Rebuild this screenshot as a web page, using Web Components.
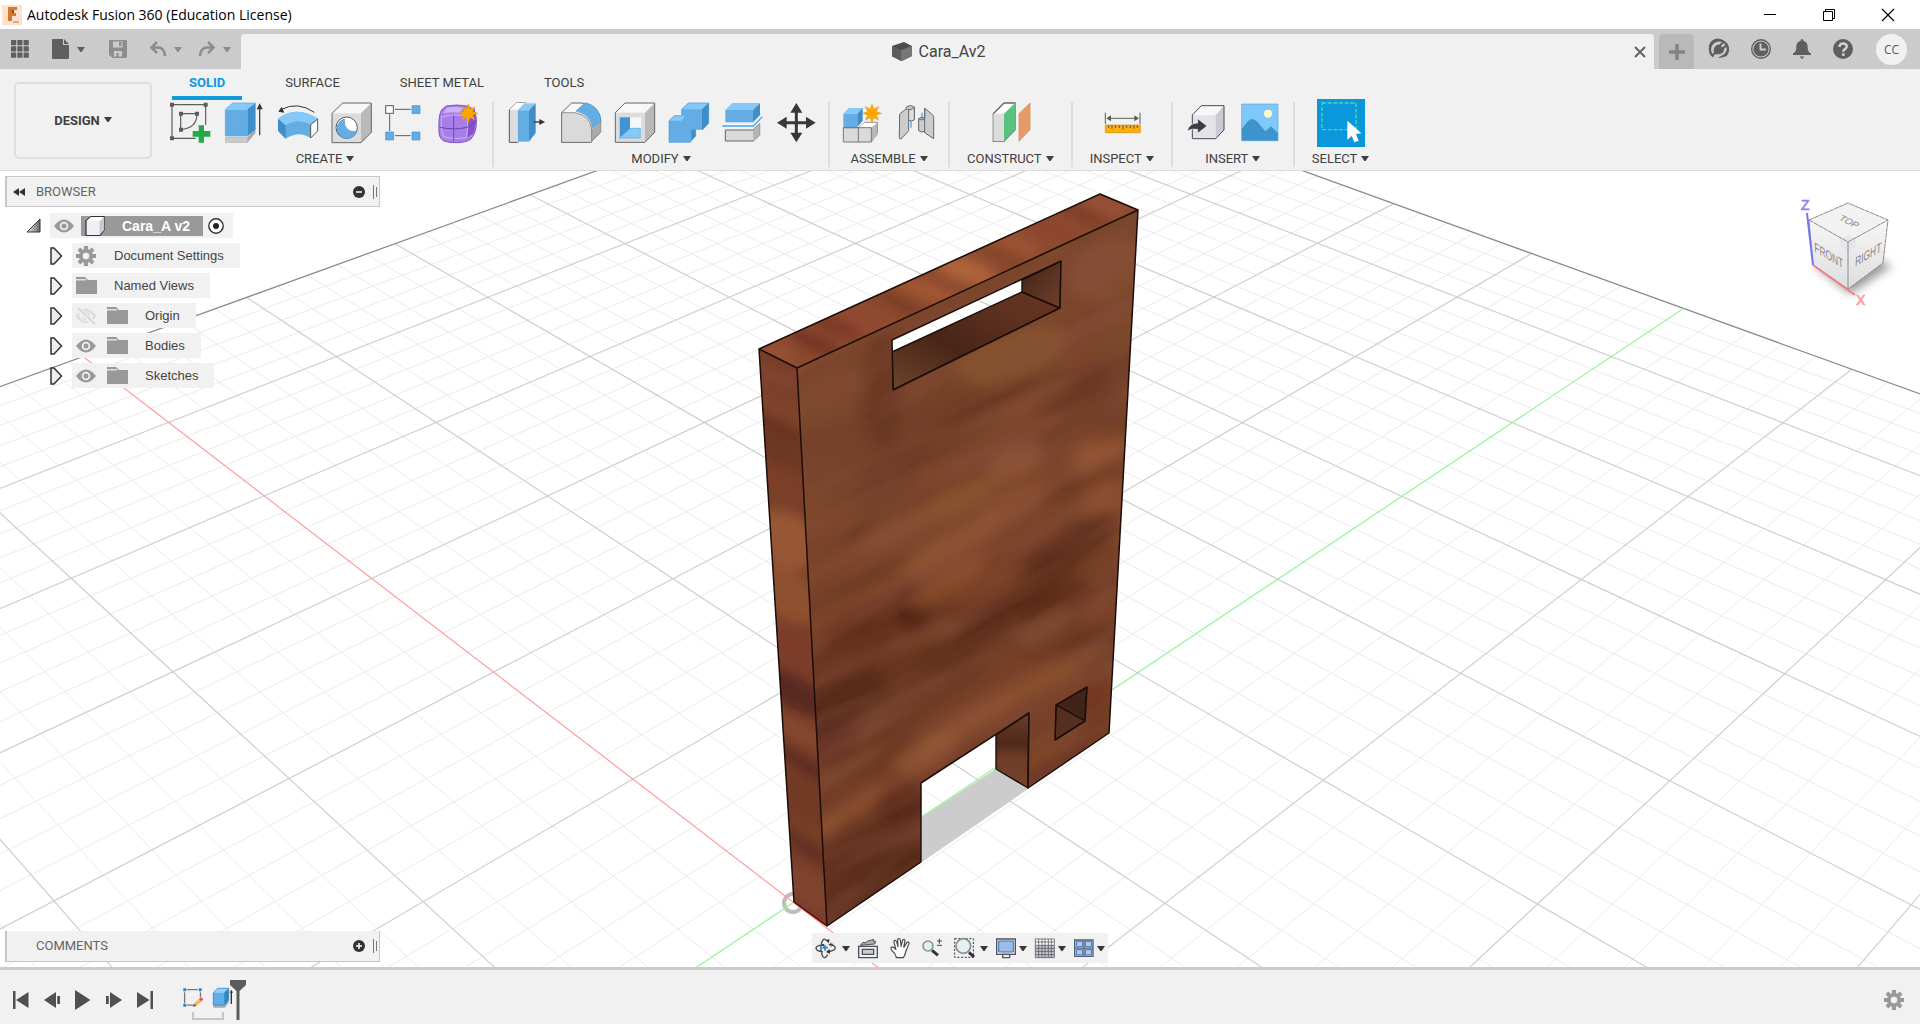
<!DOCTYPE html>
<html lang="en">
<head>
<meta charset="utf-8">
<title>Autodesk Fusion 360</title>
<style>
html,body{margin:0;height:100%}
body{background:#fff;color:#404040;font:13px/16px Roboto,"Liberation Sans",sans-serif}
</style>
</head>
<body>
<fusion-app></fusion-app>
<script>
const G='#5f5f5f', L='#5c5c5c';
const caretSvg='<svg width="8" height="5" viewBox="0 0 8 5" aria-hidden="true"><path d="M0 0h8L4.6 5H3.4z" fill="currentColor"/></svg>';
const burst=(x,y)=>{let d='';for(let i=0;i<16;i++){const r=i%2?14:29,a=Math.PI*i/8;d+=(i?'L':'M')+(x+r*Math.sin(a)).toFixed(1)+' '+(y-r*Math.cos(a)).toFixed(1)}return `<path d="${d}z" fill="#ffa500" stroke="#e08a00" stroke-width="1"/>`};
const gear=(x,y,r,c)=>{let t='';for(let i=0;i<8;i++)t+=`<rect x="${x-r*.2}" y="${y-r}" width="${r*.4}" height="${r*.5}" transform="rotate(${i*45} ${x} ${y})" fill="${c}"/>`;return t+`<circle cx="${x}" cy="${y}" r="${r*.52}" fill="none" stroke="${c}" stroke-width="${r*.38}"/>`};

/* name: [viewBox, width, height, drawing] */
const ICONS={
grid:['0 0 18 18',18,18,`<g fill="${G}">`+[0,1,2].map(i=>[0,1,2].map(j=>`<rect x="${i*6.3}" y="${j*6.3}" width="5.2" height="5.2" rx=".6"/>`).join('')).join('')+'</g>'],
file:['0 0 17 20',17,20,`<path d="M1 0h10v6h6v13q0 1-1 1H1q-1 0-1-1V1q0-1 1-1zM12 0l5 5h-5z" fill="${G}"/>`],
save:['0 0 18 18',18,18,'<path d="M1 0h16l1 1v16l-1 1H4l-4-3V1z" fill="#8d8d8d"/><path d="M4 1.500h9.500v6H4zM5 11h8v5.500H5z" fill="#cbcbcb"/><path d="M10 2h2.500v4H10zM7.500 13h2v4h-2z" fill="#8d8d8d"/>'],
undo:['0 0 16 16',16,16,'<path d="M7 1L1.500 6.500 7 12M2 6.500h6c4 0 6.500 3 7 8.500" fill="none" stroke="#8d8d8d" stroke-width="2.500"/>'],
redo:['0 0 16 16',16,16,'<path d="M9 1l5.500 5.500L9 12M14 6.500H8C4 6.500 1.500 9.500 1 15" fill="none" stroke="#8d8d8d" stroke-width="2.500"/>'],
cube:['0 0 20 20',20,20,'<path d="M0 4L12 0l8 4v10l-10 5-10-5z" fill="#4c4c4c"/><path d="M9 8l11-4v10l-11 5z" fill="#777"/><path d="M0 4l9 4v11l-9-4.500z" fill="#5d5d5d"/>'],
close:['0 0 12 12',12,12,'<path d="M1 1l10 10M11 1L1 11" stroke="#666" stroke-width="2"/>'],
plus:['0 0 16 16',16,16,'<path d="M8 0v16M0 8h16" stroke="#838383" stroke-width="3.600"/>'],
plug:['0 0 20 20',20,20,`<path d="M4.500 17.500A9 9 0 1 1 16 17" fill="none" stroke="${G}" stroke-width="2.200"/><path d="M1 13a9 9 0 0 1 14-11l3.500 3.500a9 9 0 0 1-5 13l-5 .5 7-4 3-5-2-6-6-3-6 2-3 6z" fill="${G}"/><path d="M4 16l3-3" stroke="${G}" stroke-width="2"/><path d="M6 13.500C4.500 10 7 6.500 10 6.500l4 4c0 3-4 5-8 3zM10.500 7l3.500-3.500M13.500 10L17 6.500" fill="${G}" stroke="${G}" stroke-width="2"/>`],
clock:['0 0 20 20',20,20,`<circle cx="10" cy="10" r="9.300" fill="none" stroke="${G}" stroke-width="1.400"/><circle cx="10" cy="10" r="7.600" fill="${G}"/><path d="M9.500 4.500v6H15" fill="none" stroke="#cbcbcb" stroke-width="2"/>`],
bell:['0 0 18 20',18,20,`<path d="M9 0q1.500 0 1.500 2c3 .6 4.200 3 4.200 6 0 4 1 5 3.300 6.500V16H0v-1.500C2.300 13 3.300 12 3.300 8c0-3 1.200-5.400 4.200-6Q7.500 0 9 0zM6.500 17.500h5L9 20z" fill="${G}"/>`],
help:['0 0 20 20',20,20,`<circle cx="10" cy="10" r="10" fill="${G}"/><path d="M6.500 8c0-5 7.500-4.500 7.300-.5-.2 2.500-3.600 2.500-3.600 5.300" fill="none" stroke="#d2d2d2" stroke-width="2.500"/><rect x="9" y="14.300" width="2.600" height="2.600" fill="#d2d2d2"/>`],
min:['0 0 12 12',12,12,'<path d="M0 5.500h12" stroke="#000"/>'],
restore:['0 0 12 12',12,12,'<path d="M.5 2.500h9v9h-9zM2.500 2V.5h9v9H10" fill="none" stroke="#000"/>'],
quit:['0 0 12 12',12,12,'<path d="M0 0l12 12M12 0L0 12" stroke="#000" stroke-width="1.200"/>'],

sketch:['513 306 120 120',40,40,`<path d="M519 314H620V375M519 314V415H590M545 341H594M545 341V388Q594 385 594 341" fill="none" stroke="${L}" stroke-width="3.500"/><g fill="${L}"><path d="M513 308h12v12h-12zM614 308h12v12h-12zM513 409h12v12h-12zM540 335h12v12h-12zM588 335h12v12h-12zM540 383h12v12h-12z"/></g><path d="M599 376h16v17h19v17h-19v18h-16v-18h-18v-17h18z" fill="#23a84a"/>`],
extrude:['675 306 120 120',40,40,'<path d="M679 412h66l24-24v12l-24 28h-66z" fill="#aaa"/><path d="M679 412h66v16h-66z" fill="#c9c9c9"/><path d="M679 328h66v80h-66z" fill="#64ade4"/><path d="M679 328l22-19h68l-24 19z" fill="#85c8fa"/><path d="M745 328l24-19v80l-24 19z" fill="#3f8dc9"/><path d="M679 408v-80l22-19h68v80l-24 19z" fill="none" stroke="#55a3dc" stroke-width="2"/><path d="M782 406V320" stroke="#333" stroke-width="3.500"/><path d="M773 328h18l-9-18z" fill="#333"/>'],
revolve:['837 306 120 120',40,40,'<path d="M837 356q54-42 120 0l-22 58q-36-24-75 2l-23-24z" fill="#64ade4"/><path d="M837 356l23 20v40l-23-24z" fill="#3f8dc9"/><path d="M837 356q54-42 120 0l-22 18q-36-22-75 2z" fill="#85c8fa"/><path d="M935 374l21-17v36l-21 21z" fill="#fff" stroke="#555" stroke-width="3"/><path d="M946 337q-50-34-98-9" fill="none" stroke="#333" stroke-width="3"/><path d="M838 335l10-15 8 18z" fill="#333"/>'],
hole:['999 306 120 120',40,40,'<path d="M999 340l32-31h86l-31 31z" fill="#f7f7f7"/><path d="M1086 340l31-31v88l-31 31z" fill="#b9b9b9"/><path d="M999 340h87v88h-87z" fill="#dcdcdc"/><path d="M999 340l32-31h86v88l-31 31h-87z" fill="none" stroke="#666" stroke-width="3"/><circle cx="1043" cy="383" r="32" fill="#fff" stroke="#555" stroke-width="3"/><path d="M1036 357q-3 40 37 38a30 30 0 1 1-37-38z" fill="#64ade4" stroke="#4a94cf" stroke-width="2"/>'],
pattern:['1161 306 120 120',40,40,`<path d="M1188 328h47M1172 343v50M1188 407h47" stroke="${L}" stroke-width="3"/><rect x="1160" y="317" width="23" height="23" fill="#fff" stroke="#555" stroke-width="3"/><g fill="#64ade4" stroke="#4793cc" stroke-width="2"><path d="M1239 317h24v24h-24zM1160 396h24v24h-24zM1239 396h24v24h-24z"/></g>`],
form:['1323 306 120 120',40,40,'<path d="M1343 318q30-6 60 0c20 5 30 20 29 50q0 30-17 50c-20 13-60 12-80 5-16-10-16-20-15-60 2-28 8-38 23-45z" fill="#a981e6" stroke="#7c50c4" stroke-width="3"/><path d="M1343 324q25-6 50 0l-12 14q-25-3-48 2z" fill="#cdb2f8"/><path d="M1403 345l24-20q8 40-4 75l-18 12z" fill="#8452cf"/><path d="M1328 350q40-9 76-3 6 35-2 66-38 6-68-3-10-20-6-60z" fill="#a97de8" stroke="#cdb4f5" stroke-width="3"/><path d="M1322 382q45 9 82 0l28-18M1364 346v78" stroke="#6e45b5" stroke-width="3" fill="none"/>'+burst(1408,340)],

presspull:['78 126 120 120',40,40,'<path d="M88 149l20-20h32v100l-25 18H88z" fill="#dcdcdc" stroke="#555" stroke-width="3"/><path d="M88 149l20-20h30l-20 20z" fill="#fff"/><path d="M112 151h35v95h-35z" fill="#64ade4"/><path d="M112 151l21-22h35l-21 22z" fill="#85c8fa"/><path d="M147 151l21-22v90l-21 27z" fill="#3f8dc9"/><path d="M112 246v-95l21-22h35v90l-21 27z" fill="none" stroke="#f1f1f1" stroke-width="2"/><path d="M161 186h19" stroke="#333" stroke-width="4"/><path d="M178 177l17 9-17 9z" fill="#333"/>'],
fillet:['240 126 120 120',40,40,'<path d="M245 158l30-29h30q50 6 57 48v40l-30 30h-87z" fill="#f8f8f8" stroke="#666" stroke-width="3"/><path d="M332 210l30-25v32l-30 30z" fill="#aaa"/><path d="M245 158h40q46 8 50 50v39h-90z" fill="#dadada" stroke="#666" stroke-width="2"/><path d="M288 153l28-25q44 10 47 56l-26 20q-3-40-49-51z" fill="#64ade4" stroke="#4a97d0" stroke-width="2"/>'],
shell:['402 126 120 120',40,40,'<path d="M406 158l29-29h89l-29 29z" fill="#f8f8f8"/><path d="M495 158l29-29v88l-29 30z" fill="#b8b8b8"/><path d="M406 158h89v89h-89z" fill="#dcdcdc"/><path d="M406 158l29-29h89v88l-29 30h-89z" fill="none" stroke="#666" stroke-width="3"/><path d="M419 172h64v62h-64z" fill="#f7f7f7"/><path d="M419 172h31v34l-31 28z" fill="#4295d2"/><path d="M450 205h31v29h-62z" fill="#85c8fa" stroke="#55a2db" stroke-width="2"/>'],
combine:['564 126 120 120',40,40,'<path d="M567 182l16-15h22v-19l20-19h61v61l-17 18h-22v20l-18 19h-62z" fill="#64ade4"/><path d="M567 182l16-15h30l-8 15zM605 148l20-19h61l-20 19z" fill="#85c8fa"/><path d="M666 148l20-19v61l-17 18h-3zM634 210l13-2v20l-18 19h5z" fill="#3f8dc9"/><path d="M567 182l16-15h22v-19l20-19h61v61l-17 18h-22v20l-18 19h-62z" fill="none" stroke="#4a9bd7" stroke-width="2"/>'],
split:['726 126 120 120',40,40,'<path d="M736 210h83l20-19v34l-19 18h-84z" fill="#dadada" stroke="#666" stroke-width="3"/><path d="M819 210l20-19v34l-19 18z" fill="#b5b5b5"/><path d="M736 150h83v37h-83z" fill="#64ade4"/><path d="M736 150l21-21h83l-21 21z" fill="#85c8fa"/><path d="M819 150l21-21v36l-21 22z" fill="#3f8dc9"/><path d="M727 198h94l26-28" fill="none" stroke="#fff" stroke-width="8"/><path d="M727 198h94l26-28" fill="none" stroke="#41a0e6" stroke-width="4"/>'],
move:['888 126 120 120',40,40,'<path d="M949 150v76M910 188h78" stroke="#383838" stroke-width="9"/><path d="M931 158l18-29 18 29zM931 218l18 29 18-29zM920 170l-29 18 29 18zM978 170l29 18-29 18z" fill="#383838"/>'],
component:['1089 126 120 120',40,40,'<path d="M1093 203h45l20-16h37v32l-18 27h-84z" fill="#dadada" stroke="#777" stroke-width="3"/><path d="M1138 203l18-15h39l-18 15z" fill="#fff"/><path d="M1177 203l18-15v38l-18 20z" fill="#b8b8b8"/><path d="M1138 203v43M1093 203h84v43" fill="none" stroke="#777" stroke-width="3"/><path d="M1093 161h42v40h-42z" fill="#64ade4"/><path d="M1093 161l16-17h42l-16 17z" fill="#85c8fa"/><path d="M1135 161l16-17v38l-16 19z" fill="#3f8dc9"/>'+burst(1179,160)],
joint:['1251 126 120 120',40,40,'<g stroke="#666" stroke-width="3"><path d="M1262 162l20-16v-5q13-9 24 0v37q-9 8-17 1v33l-23 25q-5 1-5-5z" fill="#ccc"/><path d="M1282 146q10 8 24-4v37q-9 8-17 1v-31" fill="#dedede"/><path d="M1337 145l22 18q5 3 5 10v63l-27-18v-4q-10 5-18-2v-36q8-8 18-2z" fill="#ccc"/><path d="M1337 145v73M1319 176q10 8 18 0" fill="none"/></g><path d="M1296 183v20M1329 158v20" stroke="#48a2e4" stroke-width="4"/>'],
construct:['153 126 120 120',40,40,'<path d="M163 161l32-32h33v80l-33 34h-32z" fill="#fff" stroke="#666" stroke-width="4"/><path d="M163 161h32v82h-32z" fill="#dcdcdc"/><path d="M195 161l33-32v80l-33 35z" fill="#57c37e"/><path d="M240 161l33-32v80l-33 35z" fill="#e69b69" stroke="#d58550" stroke-width="2"/>'],
measure:['489 126 120 120',40,40,`<path d="M499 158v34M603 158v34M510 175h82" stroke="${L}" stroke-width="3"/><path d="M502 175l14-9v18zM600 175l-14-9v18z" fill="${L}"/><path d="M499 195h105v23H499z" fill="#ffad0a" stroke="#d48c00" stroke-width="2"/><path d="M509 196v8M519 196v10M530 196v8M541 196v8M552 196v12M563 196v8M574 196v8M585 196v10M595 196v8" stroke="#555" stroke-width="3"/>`],
insert:['744 126 120 120',40,40,'<path d="M763 163l27-26h68v73l-25 26h-70z" fill="#f7f7f9"/><path d="M763 166h70v70h-70z" fill="#e3e4e9"/><path d="M833 166l25-29v73l-25 26z" fill="#c9cad3"/><path d="M763 165l27-28h68v73l-25 26h-70z" fill="none" stroke="#484a50" stroke-width="3"/><path d="M748 213q6-24 31-24v-13l28 22-28 22v-12q-18-3-31 5z" fill="#3b3d42" stroke="#f1f1f1" stroke-width="2"/>'],
picture:['902 126 120 120',40,40,'<path d="M907 132h109v110H907z" fill="#7fc8fb"/><path d="M907 207l20-25q14-11 27 3l24 29 17-15 21 20v23H907z" fill="#3d93cc"/><circle cx="986" cy="161" r="12" fill="#fff9c8"/><path d="M907 132h109v110H907z" fill="none" stroke="#59a9df" stroke-width="2"/>'],
select:['1131 117 144 144',48,48,'<path d="M1131 117h144v144h-144z" fill="#0b97db"/><path d="M1146 129h102v80h-102z" fill="none" stroke="#45dba8" stroke-width="4" stroke-dasharray="12 5"/><path d="M1222 182v57l13-11 8 19 13-5-8-20 16-2z" fill="#fff"/>'],

collapse:['0 0 12 8',12,8,'<path d="M0 4l6-4v8zM6 4l6-4v8z" fill="#333"/>'],
minus:['0 0 12 12',12,12,'<circle cx="6" cy="6" r="6" fill="#333"/><path d="M3 6h6" stroke="#fff" stroke-width="1.500"/>'],
add:['0 0 12 12',12,12,'<circle cx="6" cy="6" r="6" fill="#333"/><path d="M3 6h6M6 3v6" stroke="#fff" stroke-width="1.500"/>'],
grip:['0 0 4 14',4,14,'<path d="M.5 0v14M3.500 2v10" stroke="#777"/>'],
opened:['0 0 15 15',15,15,'<defs><linearGradient id="o"><stop stop-color="#eee"/><stop offset="1" stop-color="#666"/></linearGradient></defs><path d="M1 14L14 1v13z" fill="url(#o)" stroke="#333"/>'],
closed:['0 0 13 18',13,18,'<path d="M1 1h3l7.500 8L4 17H1z" fill="#eee" stroke="#333" stroke-width="1.500"/>'],
eye:['0 0 20 14',20,14,'<path d="M0 7Q10-6 20 7 10 20 0 7z" fill="#999"/><circle cx="10" cy="7" r="3.400" fill="none" stroke="#f1f1f1" stroke-width="1.800"/>'],
hidden:['0 0 20 16',20,16,'<path d="M1 8Q10-4 19 8 10 20 1 8z" fill="none" stroke="#ddd" stroke-width="2.500"/><circle cx="10" cy="8" r="4" fill="#ddd"/><path d="M1 0l18 16" stroke="#f1f1f1" stroke-width="5"/><path d="M2 0l17 16" stroke="#d8d8d8" stroke-width="2"/>'],
folder:['0 0 21 17',21,17,'<path d="M0 0h9l3 3h9v14H0z" fill="#999"/><path d="M0 2.800h10" stroke="#f1f1f1" stroke-width="1.200"/>'],
gear:['0 0 20 20',20,20,gear(10,10,10,'#999')],
body:['0 0 20 20',20,20,'<path d="M1 5l5-4.500h13V14l-4 5.500H1z" fill="#eef0f5" stroke="#333" stroke-width="1.200"/><path d="M14.500 5L19 .800V14l-4.500 5z" fill="#c6c9d2"/><path d="M1.500 5L6 1h12.500l-4 4z" fill="#fff"/>'],
radio:['0 0 16 16',16,16,'<circle cx="8" cy="8" r="7.200" fill="#fff" stroke="#333" stroke-width="1.400"/><circle cx="8" cy="8" r="3" fill="#222"/>'],

orbit:['75 38 60 60',20,20,'<g fill="none" stroke="#444a50" stroke-width="4"><path d="M96 80Q75 77 75 69t22-11M113 57q20 3 20 11t-24 11M110 88q-12 20-18-4t3-39q6-8 12 2"/></g><path d="M104 44l12-2-3 12zM116 71l-11 9 12 6zM91 58l9-2-2 8z" fill="#333"/><path d="M102 59v17M94 67h17" stroke="#1588e5" stroke-width="5"/><path d="M120 52v12M114 57h13" stroke="#444" stroke-width="3"/>'],
look:['198 38 60 60',20,20,'<path d="M200 63h56v34h-56z" fill="#f0f0f3" stroke="#4b5056" stroke-width="4"/><path d="M211 72h34v15h-34z" fill="#ccc" stroke="#4b5056" stroke-width="4"/><path d="M205 60l8-9 6 2q8-7 17-8l9-3-2 5 8 1-3 8z" fill="#aeb1b5" stroke="#4b5056" stroke-width="3"/>'],
pan:['296 38 60 60',20,20,'<path d="M315 97q-2-13-12-20-7-10-2-12 5-2 13 8l-6-22q-1-6 4-6 4 0 8 20l-1-20q1-7 6-5 3 2 4 24l5-20q5-5 7 1l-4 22 10-16q7-2 6 4l-9 22q-4 15-8 20z" fill="#fff" stroke="#444a50" stroke-width="3.500"/>'],
zoom:['391 38 60 60',20,20,'<circle cx="409" cy="62" r="15" fill="#e2f0f1" stroke="#8a949b" stroke-width="5"/><path d="M421 75l18 15" stroke="#333" stroke-width="9"/><path d="M443 40v15M436 47h15M436 60h15" stroke="#444" stroke-width="3"/>'],
fit:['489 38 60 60',20,20,'<path d="M491 40h56v56h-56z" fill="none" stroke="#333" stroke-width="3" stroke-dasharray="6 5"/><circle cx="517" cy="62" r="22" fill="#e4f1f0" stroke="#858f94" stroke-width="5"/><path d="M534 81l15 14" stroke="#333" stroke-width="9"/>'],
display:['613 38 60 60',20,20,'<path d="M615 41h56v46h-56z" fill="#f0f0f2" stroke="#50555d" stroke-width="4"/><path d="M621 47h44v33h-44z" fill="#9bbce9" stroke="#466fae" stroke-width="3"/><path d="M633 87h21v10h-21z" fill="#eee" stroke="#555" stroke-width="4"/>'],
gridview:['731 38 60 60',20,20,'<path d="M732 41h57v56h-57z" fill="#fff"/><path d="M732 60h57v37h-57z" fill="#c2c7d0"/><path d="M732 41h57v56h-57zM742 41v56M752 41v56M761 41v56M771 41v56M780 41v56M732 50h57M732 60h57M732 69h57M732 78h57M732 88h57" fill="none" stroke="#5b6066" stroke-width="2.500"/>'],
views:['845 38 60 60',20,20,'<path d="M847 44h55v49h-55z" fill="#dce9f9" stroke="#526078" stroke-width="4"/><path d="M852 48h19v16h-19zM879 48h19v16h-19zM852 73h19v16h-19zM879 73h19v16h-19z" fill="#aec8ed" stroke="#4974b2" stroke-width="3"/><path d="M875 44v49M847 68.500h55" stroke="#526078" stroke-width="4"/>'],

first:['0 0 16 18',16,18,`<path d="M0 0h2.500v18H0zM15.500 1v16L3 9z" fill="#505050"/>`],
prev:['0 0 16 18',16,18,`<path d="M0 9l12-8v16zM13.200 5H16v8h-2.800z" fill="#505050"/>`],
play:['0 0 16 20',16,20,`<path d="M0 0l15.500 10L0 20z" fill="#505050"/>`],
next:['0 0 16 18',16,18,`<path d="M16 9L4 1v16zM0 5h2.800v8H0z" fill="#505050"/>`],
last:['0 0 16 18',16,18,`<path d="M13.500 0H16v18h-2.500zM0 1v16l12.500-8z" fill="#505050"/>`],
stepsketch:['546 205 62 62',20,20,'<path d="M558 210h34M551 218v34M558 258h20M600 218v16" stroke="#777" stroke-width="4"/><g fill="#1689df"><path d="M547 206h9v9h-9zM595 206h9v9h-9zM547 254h9v9h-9z"/></g><path d="M580 254l15-15 8 8-15 13z" fill="#ffb53d"/><path d="M595 239l8-5 6 6-6 7z" fill="#f04b46"/><path d="M577 264l3-10 8 6z" fill="#555"/>'],
stepextrude:['637 205 60 60',20,20,'<path d="M638 256h32l14-14v7l-12 15h-34z" fill="#aaa"/><path d="M638 256v-37l13-13h33v35l-13 15z" fill="#5faee9" stroke="#408fc9" stroke-width="3"/><path d="M638 219l13-12h32l-13 12z" fill="#8fd0ff"/><path d="M671 219l12-12v34l-12 14z" fill="#3385c1"/><path d="M692 253v-36" stroke="#333" stroke-width="4"/><path d="M687 219l5-9 5 9z" fill="#333"/>'],
marker:['0 0 16 40',16,40,'<path d="M0 0h16v5L9.500 11v29h-3V11L0 5z" fill="#5c5c5c"/>']
};

const BASE=`*{box-sizing:border-box}button{all:unset;box-sizing:border-box;display:flex;align-items:center;justify-content:center;cursor:default}svg{display:block;overflow:visible;flex:none}`;
class Base extends HTMLElement{
  connectedCallback(){ if(this.shadowRoot)return; this.attachShadow({mode:'open'}).innerHTML=`<style>${BASE}${this.css()}</style>${this.html()}`; }
  css(){return ''} html(){return '<slot></slot>'}
}
const define=(n,css,html)=>customElements.define(n,class extends Base{
  css(){return typeof css==='function'?css(this):css}
  html(){return typeof html==='function'?html(this):html}
});

define('ui-icon',':host{display:block;flex:none}',el=>{const [v,w,h,d]=ICONS[el.getAttribute('name')];return `<svg viewBox="${v}" width="${w}" height="${h}" aria-hidden="true">${d}</svg>`});
define('icon-button',':host{display:block;flex:none}button{gap:var(--gap,4px);color:var(--caret,#383838)}',el=>`<button aria-label="${el.getAttribute('label')}"><ui-icon name="${el.getAttribute('icon')}"></ui-icon>${el.hasAttribute('menu')?caretSvg:''}</button>`);
define('menu-button',':host{display:block}button{gap:4px;white-space:nowrap}svg{margin-bottom:2px}','<button aria-haspopup="true"><slot></slot>'+caretSvg+'</button>');

define('title-bar',`:host{display:flex;align-items:center;height:29px;padding:0 26px 0 2px;background:#fff;color:#000;font:14px/20px "Open Sans","Noto Sans",sans-serif}
.logo{width:20px;height:20px;margin-right:5px}.t{flex:1}.w{display:flex;gap:47px}`,
`<svg class="logo" viewBox="0 0 20 20"><rect width="20" height="20" fill="#fde3cf"/><path d="M6 2h9v3h-5v3h4v3h-4v5H6z" fill="#d9772b"/><path d="M10 5h2v3h-2z" fill="#8e4312"/><path d="M11 16h6v2h-6z" fill="#f2a365"/></svg><span class="t">Autodesk Fusion 360 (Education License)</span>
<div class="w"><icon-button icon="min" label="Minimize"></icon-button><icon-button icon="restore" label="Restore"></icon-button><icon-button icon="quit" label="Close"></icon-button></div>`);

define('document-bar',`:host{display:flex;height:40px;background:#cbcbcb;align-items:stretch}
.quick{display:flex;align-items:center;width:241px;padding-left:11px}
.quick icon-button{--gap:8px;--caret:#5f5f5f}.quick .a{margin-left:23px}.quick .b{margin-left:24px}.quick .c{margin-left:23px}.quick .d{margin-left:17px}.quick .c,.quick .d{--caret:#8d8d8d}
.tab{flex:1;display:flex;align-items:center;margin-top:5px;padding:0 8px 0 2px;background:#f1f1f1;border-radius:4px 4px 0 0}
.name{flex:1;display:flex;gap:7px;align-items:center;justify-content:center;font:16px/20px Roboto,sans-serif;color:#444}
.new{width:35px;margin:5px 0 0 5px;background:#b9b9b9;border-radius:4px 4px 0 0;display:grid;place-items:center}
.tools{display:flex;align-items:center;gap:22px;padding:0 13px 0 15px}
.user{width:31px;height:31px;border-radius:50%;background:#f1f1f1;color:#4d5b66;font:12px/31px "Open Sans",sans-serif;margin-left:1px}`,
`<div class="quick"><icon-button icon="grid" label="Data panel"></icon-button><icon-button class="a" icon="file" label="File" menu></icon-button><icon-button class="b" icon="save" label="Save"></icon-button><icon-button class="c" icon="undo" label="Undo" menu></icon-button><icon-button class="d" icon="redo" label="Redo" menu></icon-button></div>
<div class="tab"><div class="name"><ui-icon name="cube"></ui-icon><span>Cara_Av2</span></div><icon-button icon="close" label="Close tab"></icon-button></div>
<div class="new"><icon-button icon="plus" label="New tab"></icon-button></div>
<div class="tools"><icon-button icon="plug" label="Extensions"></icon-button><icon-button icon="clock" label="Job status"></icon-button><icon-button icon="bell" label="Notifications"></icon-button><icon-button icon="help" label="Help"></icon-button><button class="user">CC</button></div>`);

define('tool-group',el=>`:host{display:flex;flex-direction:column;align-items:center;gap:9px;padding:0 ${el.getAttribute('pad')||12}px;border-right:2px solid #dedede;height:65px}:host([last]){border:0;gap:4px;margin-top:-3px}.i{display:flex;gap:14px;justify-content:center}`,
 el=>`<div class="i"><slot></slot></div><menu-button>${el.getAttribute('label')}</menu-button>`);

define('tool-ribbon',`:host{display:flex;height:102px;background:#f1f1f1;border-bottom:1px solid #dcdcdc;padding:0 14px}
.design{width:138px;height:77px;margin-top:13px;border:2px solid #dedede;border-radius:5px;display:grid;place-items:center;font-weight:700}
.main{margin-left:6px}
.tabs{display:flex;gap:26px;padding-left:14px;height:33px}
.tabs button{padding:6px 17px 5px;height:31px;border-bottom:4px solid transparent}
.tabs .on{color:#0e97dc;font-weight:700;border-color:#1499da}
.groups{display:flex}`,
`<div class="design"><menu-button>DESIGN</menu-button></div>
<div class="main"><div class="tabs" role="tablist"><button role="tab" class="on">SOLID</button><button role="tab">SURFACE</button><button role="tab">SHEET METAL</button><button role="tab">TOOLS</button></div>
<div class="groups">
<tool-group label="CREATE"><icon-button icon="sketch" label="Create sketch"></icon-button><icon-button icon="extrude" label="Extrude"></icon-button><icon-button icon="revolve" label="Revolve"></icon-button><icon-button icon="hole" label="Hole"></icon-button><icon-button icon="pattern" label="Pattern"></icon-button><icon-button icon="form" label="Form"></icon-button></tool-group>
<tool-group label="MODIFY"><icon-button icon="presspull" label="Press pull"></icon-button><icon-button icon="fillet" label="Fillet"></icon-button><icon-button icon="shell" label="Shell"></icon-button><icon-button icon="combine" label="Combine"></icon-button><icon-button icon="split" label="Split"></icon-button><icon-button icon="move" label="Move"></icon-button></tool-group>
<tool-group label="ASSEMBLE"><icon-button icon="component" label="New component"></icon-button><icon-button icon="joint" label="Joint"></icon-button></tool-group>
<tool-group label="CONSTRUCT" pad="17"><icon-button icon="construct" label="Offset plane"></icon-button></tool-group>
<tool-group label="INSPECT" pad="17"><icon-button icon="measure" label="Measure"></icon-button></tool-group>
<tool-group label="INSERT" pad="13"><icon-button icon="insert" label="Insert derive"></icon-button><icon-button icon="picture" label="Canvas"></icon-button></tool-group>
<tool-group label="SELECT" pad="17" last><icon-button icon="select" label="Select"></icon-button></tool-group>
</div></div>`);

/* Ground plane: perspective mapping of grid cells to the canvas */
const project=(s,t)=>{const d=1+.0768*s+.0753*t;return d<.25?null:[793.5+(-173*s+197.9*t)/d,902.5-(132.9*s+132.1*t)/d]};
const gridPaths=()=>{
  const S0=-8,S1=6,T0=-8,T1=6.8;let minor='',major='';
  const line=(f,a,b)=>{let d='',last=null,first=null;for(let i=0;i<=60;i++){const p=project(...f(a+(b-a)*i/60));if(p){first=first||p;last=p}}if(first&&last&&first!==last)d=`M${first.map(v=>v.toFixed(1))}L${last.map(v=>v.toFixed(1))}`;return d};
  for(let i=-40;i<30;i++){if(i===0)continue;const d=line(t=>[i/5,t],T0,T1);i%5?minor+=d:major+=d}
  for(let i=-40;i<34;i++){if(i===0)continue;const d=line(s=>[s,i/5],S0,S1);i%5?minor+=d:major+=d}
  return {minor,major,edge:line(t=>[S1,t],T0,T1)+line(s=>[s,T1],S0,S1),red:line(s=>[s,0],S0,S1),green:line(t=>[0,t],T0,T1)};
};
/* Wood grain: x, y, half length, half thickness, angle, colour, opacity */
const FRONT=[
[900,650,120,55,-28,'#5f2f1f',.6],[1050,590,80,70,-28,'#64331f',.55],[860,860,70,50,-30,'#5c2c1d',.6],[860,450,70,60,-25,'#713e2a',.5],
[883,392,22,60,0,'#643320',.6],[830,400,40,22,-25,'#834e31',.5],[973,400,70,16,-25,'#6c3922',.7],[1010,357,60,24,-20,'#8a5530',.8],[935,395,40,20,-20,'#74412a',.6],
[1108,270,40,28,-30,'#885234',.75],[1050,235,30,14,-25,'#8a5530',.6],[1090,385,65,16,-25,'#613120',.8],[1020,410,60,12,-25,'#86502f',.5],[1000,398,70,6,-25,'#5f301e',.6],[940,448,80,6,-25,'#643420',.6],[905,465,80,5,-25,'#5f301d',.6],[985,475,90,5,-26,'#633320',.8],[1075,430,65,5,-25,'#5c2c1b',.8],
[890,515,95,6,-25,'#5f301e',.8],[1015,462,30,14,-25,'#985d3a',.7],[953,500,50,14,-26,'#92592f',.7],[1100,455,30,18,-30,'#9a5a35',.75],[1105,500,22,22,-30,'#94522f',.7],[1090,480,60,6,-26,'#5c2d1c',.7],
[953,545,60,12,-30,'#965a32',.7],[900,525,40,16,-25,'#895231',.6],[830,500,30,50,0,'#7e482b',.4],[1012,505,40,14,-27,'#935631',.6],
[1075,540,50,14,-30,'#562719',.75],[1050,558,50,14,-30,'#562719',.7],[1020,540,45,5,-26,'#9a5138',.6],[1110,560,30,10,-35,'#7e452c',.6],[850,585,70,6,-25,'#5f301d',.7],[873,623,50,14,-22,'#5b291b',.6],[913,608,16,26,-5,'#4e2116',.7],[947,583,45,12,-30,'#94542f',.7],[990,585,40,14,-27,'#86482c',.6],[915,645,50,10,-30,'#84492b',.7],[985,625,90,6,-28,'#542618',.8],
[970,648,55,14,-28,'#643420',.7],[1020,595,70,6,-28,'#5a2a1a',.8],[1057,605,40,18,-28,'#572819',.6],[1045,630,32,10,-30,'#84502f',.7],[1090,650,38,16,-30,'#5f321f',.8],[1060,672,60,8,-30,'#915731',.8],[1100,610,24,10,-35,'#8a4b31',.6],
[847,706,50,20,-25,'#51261b',.75],[870,670,80,7,-28,'#572919',.7],[830,740,30,24,-20,'#57291c',.6],[905,700,50,12,-28,'#74422b',.6],[1000,700,90,8,-30,'#8d5029',.7],[935,700,80,6,-30,'#5f301d',.5],[973,722,60,10,-30,'#945732',.7],[927,752,36,16,-30,'#985b37',.7],[880,755,50,12,-30,'#633320',.6],
[838,818,55,9,-33,'#965b32',.85],[868,800,40,12,-30,'#884b30',.7],[905,805,30,20,-20,'#562719',.8],[873,880,70,20,-30,'#54261a',.8],[835,905,30,20,-30,'#6a3a26',.5],[845,770,45,7,-30,'#7d482b',.7],
[1048,747,36,12,-35,'#81482a',.7],[1095,700,14,34,0,'#70341f',.6],[1060,770,40,10,-33,'#592a1a',.6],[1120,330,16,60,2,'#7c4a2c',.5],[1120,430,30,5,-25,'#643019',.6]];
const SIDE=[[770,375,40,7,20,'#83492f',.8],[775,410,40,16,25,'#83452e',.6],[775,425,40,5,25,'#58281a',.8],[780,450,40,14,25,'#6a3525',.7],[780,485,40,12,25,'#7d402b',.7],[785,540,40,28,25,'#9c5a36',.85],[787,595,40,24,30,'#94542f',.8],[790,650,40,18,30,'#7d3d29',.7],[795,693,40,16,30,'#54241d',.85],[797,730,40,10,30,'#8a4c30',.7],[805,765,40,7,33,'#54241a',.8],[805,800,40,20,33,'#703822',.7],[810,850,40,8,33,'#5a2a1a',.7],[812,890,36,16,33,'#824630',.7]];
const TOP=[[775,355,16,12,20,'#9a5233',.8],[815,343,30,7,25,'#682c20',.8],[835,325,30,9,25,'#783528',.8],[860,320,40,9,25,'#934a2f',.8],[900,303,30,4,25,'#6a3020',.7],[925,290,36,8,20,'#a85b33',.85],[965,270,34,12,20,'#b3673b',.9],[1000,255,30,4,25,'#7c3c24',.6],[1015,243,30,8,22,'#a25535',.8],[1050,228,40,8,22,'#8c4530',.7],[1085,215,34,4,22,'#6b2f1e',.7],[1105,205,30,8,22,'#98523a',.8]];
const streaks=a=>a.map(([x,y,rx,ry,r,c,o])=>`<ellipse cx="${x}" cy="${y}" rx="${rx}" ry="${ry}" transform="rotate(${r} ${x} ${y})" fill="${c}" opacity="${o}"/>`).join('');
define('model-canvas',':host{display:block;overflow:hidden;min-height:0}svg{width:100%;height:100%;overflow:hidden}',()=>{const g=gridPaths();return `
<svg viewBox="0 171 1920 796" preserveAspectRatio="xMidYMid slice" role="img" aria-label="Wooden panel model on the ground grid">
<defs>
<clipPath id="cf"><path clip-rule="evenodd" d="M797 368L1138 210 1109 733 1028 788 1029 713 921 783 921 862 827 926zM892 340L1061 261 1060 308 893 390zM1056 705L1087 687 1085 721 1055 740z"/></clipPath>
<clipPath id="cs"><path d="M759 349l38 19 30 558-33-24z"/></clipPath>
<clipPath id="ct"><path d="M759 349L1100 194l38 16-341 158z"/></clipPath>
<filter id="soft" x="-30%" y="-30%" width="160%" height="160%"><feGaussianBlur stdDeviation="7"/></filter>
<filter id="soft2" x="-30%" y="-30%" width="160%" height="160%"><feGaussianBlur stdDeviation="6"/></filter>
<filter id="grain" x="0" y="0" width="1" height="1"><feTurbulence type="fractalNoise" baseFrequency=".007 .045" numOctaves="2" seed="4"/><feColorMatrix values="0 0 0 0 .25  0 0 0 0 .08  0 0 0 0 .05  3 0 0 0 -1.2"/></filter>
<linearGradient id="bf" x1="0" y1="0" x2="0" y2="1"><stop stop-color="#7a452c"/><stop offset=".5" stop-color="#7e472c"/><stop offset="1" stop-color="#6b3623"/></linearGradient>
<linearGradient id="floor" x1="0" y1="1" x2="1" y2="0"><stop stop-color="#6e452a"/><stop offset=".4" stop-color="#482518"/><stop offset=".7" stop-color="#5c3020"/><stop offset="1" stop-color="#6a3522"/></linearGradient>
<linearGradient id="wall" x1="0" y1="0" x2="1" y2="1"><stop stop-color="#422318"/><stop offset="1" stop-color="#70402a"/></linearGradient>
<linearGradient id="leg" x1="0" y1="0" x2="0" y2="1"><stop stop-color="#6c3f29"/><stop offset=".4" stop-color="#4e281a"/><stop offset=".6" stop-color="#6f3d27"/><stop offset="1" stop-color="#74402b"/></linearGradient>
</defs>
<g fill="none"><path d="${g.minor}" stroke="#ebebeb"/><path d="${g.major}" stroke="#cfcfcf" stroke-width="1.200"/><path d="${g.edge}" stroke="#8c8c8c" stroke-width="1.300"/></g>
<circle cx="793" cy="903" r="9" fill="none" stroke="#bdbdbd" stroke-width="4"/>
<path d="M922 817L996 769 1028 789 922 862z" fill="#ccc"/>
<g fill="none" stroke-width="1.200"><path d="${g.red}" stroke="#ff9c9c"/><path d="${g.green}" stroke="#93f593"/></g>
<g stroke="#1b0d08" stroke-width="1.400" stroke-linejoin="round">
<path d="M996 735L1029 713 1028 788 996 769z" fill="url(#leg)"/>
<path d="M892 352L1022 292 1060 308 893 390z" fill="url(#floor)"/>
<path d="M1022 280L1061 261 1060 308 1022 292z" fill="url(#wall)"/>
<path d="M1056 705L1087 687 1085 721z" fill="#40241a"/><path d="M1056 705L1085 721 1055 740z" fill="#553020"/>
</g>
<g clip-path="url(#cf)"><rect x="750" y="190" width="400" height="750" fill="url(#bf)"/><g filter="url(#soft)">${streaks(FRONT)}</g><g transform="rotate(-27 960 560)"><rect x="560" y="100" width="800" height="900" filter="url(#grain)" opacity=".35"/></g></g>
<g clip-path="url(#cs)"><rect x="750" y="340" width="90" height="600" fill="#783e29"/><g filter="url(#soft2)">${streaks(SIDE)}</g></g>
<g clip-path="url(#ct)"><rect x="750" y="190" width="400" height="190" fill="#8c4a2e"/><g filter="url(#soft2)">${streaks(TOP)}</g></g>
<g fill="none" stroke="#1b0d08" stroke-width="1.500" stroke-linejoin="round"><path d="M759 349L1100 194 1138 210 1109 733 1028 788 1029 713 921 783 921 862 827 926 794 902zM759 349L797 368 1138 210M797 368L827 926M892 340L1061 261 1060 308 893 390zM1056 705L1087 687 1085 721 1055 740z"/></g>
<path d="M794 902l33 24" stroke="#7a0c0c" stroke-width="1.200"/>
</svg>`});

define('dock-panel',`:host{display:flex;align-items:center;width:375px;height:31px;padding:0 2px 0 6px;border:1px solid #c6c6c6;border-width:1px 1px 1px 2px;background:#f1f1f1;color:#646464}
:host([open-top]){border-top:0}.c{width:12px;height:8px;margin-right:11px}.t{flex:1;font-size:13px}.g{margin-left:8px}`,
el=>`<div class="c">${el.hasAttribute('open-top')?'':'<icon-button icon="collapse" label="Collapse"></icon-button>'}</div><span class="t"><slot></slot></span><icon-button icon="${el.getAttribute('action')}" label="Toggle"></icon-button><ui-icon class="g" name="grip"></ui-icon>`);

define('tree-row',`:host{display:flex;align-items:center;height:25px;padding-left:50px;font:13px/18px "Liberation Sans",Arial,sans-serif;color:#444}
.a{width:22px;display:flex;flex:none}.chip{display:flex;align-items:center;height:25px;padding:0 16px 0 4px;background:#f1f1f1;white-space:nowrap}
.ic{width:20px;display:flex;justify-content:center;margin-right:11px}.last{margin-right:18px}
:host([root]){padding-left:26px}:host([root]) .a{width:24px}:host([root]) .chip{padding:0 9px 0 4px}
:host([root]) .ic{margin-right:7px}.sel{display:flex;align-items:center;height:20px;background:#999;color:#fff;font-weight:700;font-size:14px;padding:0 13px 0 4px;gap:17px;margin-right:5px}`,
el=>{const ic=(el.getAttribute('icons')||'').split(' ');
 if(el.hasAttribute('root'))return `<span class="a"><ui-icon name="opened"></ui-icon></span><div class="chip"><span class="ic"><ui-icon name="eye"></ui-icon></span><span class="sel"><ui-icon name="body"></ui-icon><slot></slot></span><ui-icon name="radio"></ui-icon></div>`;
 return `<span class="a"><ui-icon name="closed"></ui-icon></span><div class="chip">${ic.map((n,i)=>`<span class="ic ${i===ic.length-1?'last':''}"><ui-icon name="${n}"></ui-icon></span>`).join('')}<slot></slot></div>`});

define('browser-tree',`:host{display:flex;flex-direction:column}.rows{display:flex;flex-direction:column;gap:5px;margin-top:6px}dock-panel{margin-left:5px}`,
`<dock-panel action="minus">BROWSER</dock-panel><div class="rows"><tree-row root>Cara_A v2</tree-row><tree-row icons="gear">Document Settings</tree-row><tree-row icons="folder">Named Views</tree-row><tree-row icons="hidden folder">Origin</tree-row><tree-row icons="eye folder">Bodies</tree-row><tree-row icons="eye folder">Sketches</tree-row></div>`);

define('view-cube',':host{display:block}text{font-family:"Liberation Sans",Arial,sans-serif}',
`<svg width="110" height="120" viewBox="1795 190 110 120"><defs><filter id="b" x="-50%" y="-50%" width="200%" height="200%"><feGaussianBlur stdDeviation="5"/></filter><linearGradient id="l" x1="0" y1="0" x2="0" y2="1"><stop stop-color="#f6f6f6"/><stop offset="1" stop-color="#dedede"/></linearGradient></defs>
<path d="M1815 266L1848 245 1892 266 1850 294z" fill="#777" opacity=".75" filter="url(#b)"/>
<path d="M1809 220L1848 242V289L1813 265z" fill="url(#l)"/><path d="M1848 242L1888 220 1883 263 1848 289z" fill="url(#l)"/><path d="M1809 220L1848 203 1888 220 1848 242z" fill="#f2f2f2"/>
<path d="M1840 239l8-4 8 4v7l-8 5-8-5z" fill="#dfe3e8" opacity=".7"/>
<path d="M1809 220L1848 203 1888 220 1883 263 1848 289 1813 265zM1809 220L1848 242 1888 220" fill="none" stroke="#8c8c8c" stroke-dasharray="5 .5"/><path d="M1848 242V289" stroke="#8c8c8c"/>
<path d="M1807 213L1813 265" stroke="#7474f4" stroke-width="2"/><path d="M1813 265L1855 295" stroke="#f08080" stroke-width="2"/>
<g fill="#82868b" font-size="12" text-anchor="middle"><text font-size="11" transform="matrix(.8 .4 -.6 .6 1847 224)">TOP</text><text transform="matrix(.7 .42 .05 1.100 1829 260)">FRONT</text><text transform="matrix(.7 -.42 -.05 1.100 1868 259)">RIGHT</text></g>
<text x="1801" y="210" font-size="14" fill="#8585f8" stroke="#8585f8" stroke-width=".6">Z</text><text x="1856" y="305" font-size="14" fill="#f99" stroke="#f99" stroke-width=".6">X</text></svg>`);

define('nav-bar',`:host{display:flex;align-items:center;width:296px;height:30px;padding:0 4px;background:#f1f1f1;gap:8px}icon-button{--gap:3px}.far{--gap:6px}.wide{margin-left:4px}`,
`<icon-button class="far" icon="orbit" label="Orbit" menu></icon-button><icon-button icon="look" label="Look at"></icon-button><icon-button class="wide" icon="pan" label="Pan"></icon-button><icon-button class="wide" icon="zoom" label="Zoom"></icon-button><icon-button class="far wide" icon="fit" label="Fit" menu></icon-button><icon-button icon="display" label="Display settings" menu></icon-button><icon-button icon="gridview" label="Grid and snaps" menu></icon-button><icon-button icon="views" label="Viewports" menu></icon-button>`);

define('time-line',`:host{display:flex;align-items:center;height:57px;background:#f1f1f1;border-top:3px solid #cbcbcb;padding:6px 16px 0 13px}
.p{display:flex;gap:15px;align-items:center}.s{display:grid;grid-template-columns:20px 20px;column-gap:10px;row-gap:4px;margin:8px 0 0 30px}
.br{grid-column:1/3;height:8px;margin:0 9px;border:2px solid #c6c6c6;border-top:0}.m{margin:0 0 0 -3px;z-index:1}.x{flex:1}`,
`<div class="p"><icon-button icon="first" label="Start"></icon-button><icon-button icon="prev" label="Previous"></icon-button><icon-button icon="play" label="Play"></icon-button><icon-button icon="next" label="Next"></icon-button><icon-button icon="last" label="End"></icon-button></div>
<div class="s"><icon-button icon="stepsketch" label="Sketch1"></icon-button><icon-button icon="stepextrude" label="Extrude1"></icon-button><span class="br"></span></div><ui-icon class="m" name="marker"></ui-icon><span class="x"></span><icon-button icon="gear" label="Timeline settings"></icon-button>`);

define('fusion-app',`:host{display:flex;flex-direction:column;height:100vh;overflow:hidden}
.stage{flex:1;min-height:0;display:grid;grid-template:minmax(0,1fr)/minmax(0,1fr);overflow:hidden}.stage>*{grid-area:1/1}
browser-tree{place-self:start;padding-top:5px}dock-panel{place-self:end start;margin:0 0 5px 5px}view-cube{place-self:start end;margin:19px 15px 0 0}nav-bar{place-self:end center;margin-bottom:4px}`,
`<title-bar></title-bar><document-bar></document-bar><tool-ribbon></tool-ribbon><main class="stage"><model-canvas></model-canvas><browser-tree></browser-tree><dock-panel open-top action="add">COMMENTS</dock-panel><view-cube></view-cube><nav-bar></nav-bar></main><time-line></time-line>`);
</script>
</body>
</html>
